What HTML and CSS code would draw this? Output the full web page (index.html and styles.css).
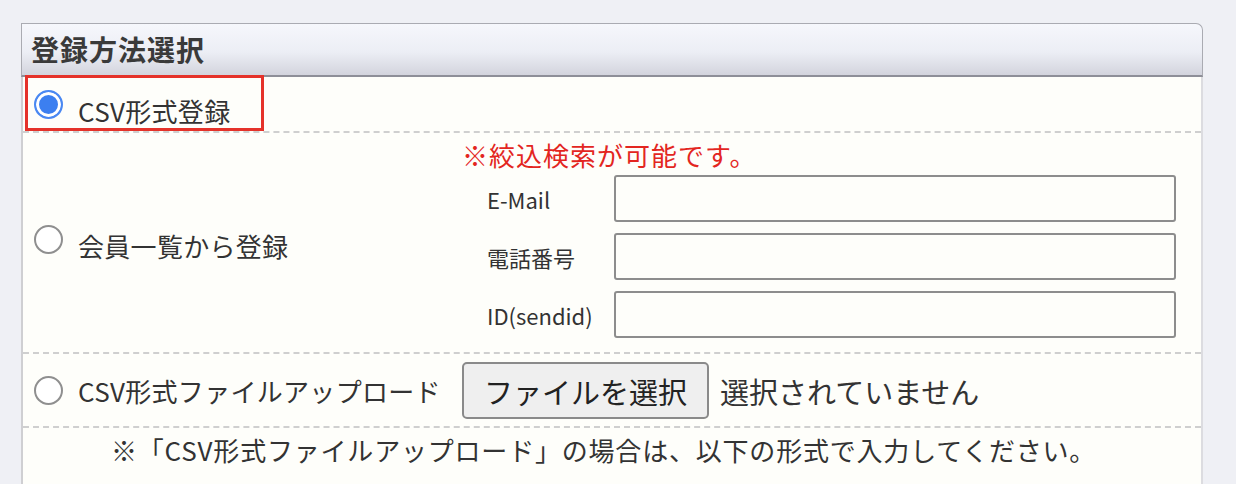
FILE: index.html
```html
<!DOCTYPE html>
<html lang="ja">
<head>
  <meta charset="UTF-8" />
  <title>登録方法選択</title>
  <link rel="stylesheet" href="styles.css">
</head>
<body>
<div class="panel">
  <div class="panel-head">登録方法選択</div>
  <div class="panel-body">

    <div class="row row-first">
      <label class="choice lowered">
        <input type="radio" name="method" value="csv" checked>
        <span>CSV形式登録</span>
      </label>
      <span class="mark"></span>
    </div>

    <div class="row row-search">
      <label class="choice lowered">
        <input type="radio" name="method" value="member">
        <span>会員一覧から登録</span>
      </label>
      <div class="search">
        <p class="note">※絞込検索が可能です。</p>
        <div class="search-grid">
          <span class="field-label">E-Mail</span>
          <input type="text" name="email">
          <span class="field-label">電話番号</span>
          <input type="text" name="tel">
          <span class="field-label">ID(sendid)</span>
          <input type="text" name="sendid">
        </div>
      </div>
    </div>

    <div class="row row-file">
      <label class="choice">
        <input type="radio" name="method" value="upload">
        <span>CSV形式ファイルアップロード</span>
      </label>
      <div class="file">
        <button type="button" class="file-btn">ファイルを選択</button>
        <span class="file-name">選択されていません</span>
      </div>
    </div>

    <p class="footnote">※「CSV形式ファイルアップロード」の場合は、以下の形式で入力してください。</p>

  </div>
</div>
</body>
</html>
```

FILE: styles.css
```css
body { margin: 0; background: #eff0f5; font-family: "Noto Sans CJK JP", "Noto Sans", sans-serif; color: #333; }
.panel { width: 1182px; margin: 23px 0 0 21px; }
.panel-head { height: 51px; line-height: 51px; padding-left: 9px; font-size: 28px; font-weight: bold; letter-spacing: 1px; color: #3a3a3a;
  background: linear-gradient(#f6f7fc, #eceef5 55%, #d3d4dd); border: 1px solid #aaabb2; border-bottom: 2px solid #8e8f98; border-radius: 0 7px 0 0; }
.panel-body { background: #fefefa; border-left: 2px solid #cfcfd2; border-right: 2px solid #dcdce0; height: 407px; }
.row { display: grid; grid-template-columns: 439px 1fr; align-items: center; border-bottom: 2px dashed #cfcfcf; }
.row-first { height: 54px; position: relative; }
.row-search { padding: 7px 0 14px; align-items: center; }
.row-file { padding: 8px 0 7px; }
.choice { display: flex; align-items: center; gap: 15px; padding-left: 11px; font-size: 26px; color: #333; }
.choice span { letter-spacing: 0.3px; }
.choice.lowered span { padding-top: 12px; }
.choice input { appearance: none; margin: 0; width: 29px; height: 29px; border-radius: 50%; border: 2px solid #8f8f8f; background: #fff; flex: none; }
.choice input:checked { border-color: #4a88f2; background: #3c7ff0; box-shadow: inset 0 0 0 3px #fff; }
.mark { position: absolute; left: 2px; top: -2px; width: 233px; height: 50px; border: 3px solid #e5322a; }
.note { margin: 0 0 5px; font-size: 26px; line-height: 30px; letter-spacing: 1px; color: #e3261f; }
.search-grid { display: grid; grid-template-columns: 127px 562px; row-gap: 11px; align-items: center; margin-left: 25px; }
.field-label { font-size: 22px; color: #333; }
.search-grid input { height: 47px; box-sizing: border-box; border: 2px solid #8d8d8d; border-radius: 3px; background: #fefefa; margin: 0; }
.file { display: flex; align-items: center; gap: 11px; }
.file-btn { width: 247px; height: 57px; font-family: inherit; font-size: 29px; color: #222; background: #efefef; border: 2px solid #8a8a8a; border-radius: 5px; padding: 0; }
.file-name { font-size: 29px; color: #333; }
.footnote { margin: 0; padding: 4px 0 0 88px; font-size: 26px; line-height: 36px; letter-spacing: 0.8px; color: #333; }
```
